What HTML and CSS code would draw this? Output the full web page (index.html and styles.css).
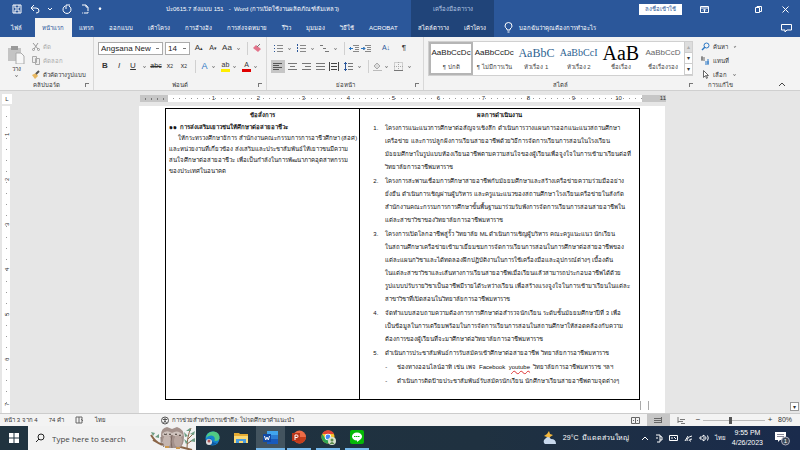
FILE: index.html
```
<!DOCTYPE html>
<html lang="th">
<head>
  <meta charset="UTF-8">
  <meta name="viewport" content="width=device-width, initial-scale=1.0">
  <title>Word</title>
  <link rel="stylesheet" href="styles.css">
</head>
<body>

<header class="header">
  <div class="titlebar">
    <div class="quick">
      <button aria-label="Save"><svg width="10" height="10" viewBox="0 0 10 10"><path d="M1 1h8v8H1zM3 1v3h4V1M3 9V6h4v3" /></svg></button>
      <button aria-label="Undo"><svg width="10" height="10" viewBox="0 0 10 10"><path d="M4 1L1 4l3 3M1 4h5q3 0 3 3q0 2-3 2" /></svg></button>
      <button class="tiny" aria-label="Undo list"><svg width="4" height="4" viewBox="0 0 4 4"><path d="M0 1l2 2 2-2" /></svg></button>
      <button aria-label="Repeat"><svg width="10" height="10" viewBox="0 0 10 10"><path d="M3 2a4 4 0 1 0 4 0M4 5V1h4" /></svg></button>
      <button aria-label="New"><svg width="10" height="10" viewBox="0 0 10 10"><path d="M2 1h4l2 2v6H2M6 1v2h2" stroke-dasharray="5 1" /></svg></button>
      <button class="tiny" aria-label="Customize"><svg width="4" height="4" viewBox="0 0 4 4"><path d="M1 1h2L2 3z" fill="#fff" /></svg></button>
    </div>
    <span class="doc-title">ปะ0615.7 ส่งแบบ 151 &nbsp; - &nbsp;Word (การเปิดใช้งานผลิตภัณฑ์ล้มเหลว)</span>
  </div>
  <div class="context-title">เครื่องมือตาราง</div>
  <div class="window-controls">
    <button class="sign-in">ลงชื่อเข้าใช้</button>
    <button aria-label="Ribbon options"><svg width="9" height="9" viewBox="0 0 9 9"><path d="M.5 1.5h8v6h-8zM.5 3h8M4.500 7V4.500M3 5.500l1.500-1.500 1.500 1.500" /></svg></button>
    <button aria-label="Restore"><svg width="9" height="9" viewBox="0 0 9 9"><path d="M1.500 2.500h4v5h-4zM3 2.500v-1h4.500v5h-2" /></svg></button>
    <button aria-label="Close"><svg width="9" height="9" viewBox="0 0 9 9"><path d="M1.500 1.500l6 6M7.500 1.500l-6 6" /></svg></button>
  </div>
  <nav class="tabs">
    <a href="#" class="file">ไฟล์</a>
    <a href="#" class="active">หน้าแรก</a>
    <a href="#">แทรก</a>
    <a href="#">ออกแบบ</a>
    <a href="#">เค้าโครง</a>
    <a href="#">การอ้างอิง</a>
    <a href="#">การส่งจดหมาย</a>
    <a href="#">รีวิว</a>
    <a href="#">มุมมอง</a>
    <a href="#">วิธีใช้</a>
    <a href="#">ACROBAT</a>
  </nav>
  <nav class="tabs context">
    <a href="#">สไตล์ตาราง</a>
    <a href="#">เค้าโครง</a>
  </nav>
  <div class="tell-me">
    <svg width="9" height="11" viewBox="0 0 9 11"><path d="M3 8V7Q1 5.500 1 4a3.500 3.500 0 0 1 7 0Q8 5.500 6 7v1zM3.500 10h2" /></svg>
    <span>บอกฉันว่าคุณต้องการทำอะไร</span>
    <button aria-label="Comments"><svg width="11" height="10" viewBox="0 0 11 10"><path d="M.5 1.500h10v5.500H6L4 9V7H.5z" /></svg></button>
  </div>
</header>

<section class="ribbon">
  <div class="group clipboard">
    <div class="group-body">
      <button class="paste">
        <svg width="18" height="19" viewBox="0 0 18 19"><path d="M1 3h13v13H1z" fill="#c4c4c4" /><path d="M4 1h7v4H4z" fill="#999" /><path d="M9 8h5l3 3v8H9z" fill="#f7f7f7" stroke="#aaa" /></svg>
        <span>วาง</span>
        <i class="arrow"></i>
      </button>
      <div class="stack">
        <button class="disabled"><svg width="8" height="9" viewBox="0 0 8 9"><path d="M1 1l5 6M6 1L2 7" stroke="#999" /><circle cx="1.500" cy="7.500" r="1" stroke="#999" fill="none" /><circle cx="6.500" cy="7.500" r="1" stroke="#999" fill="none" /></svg>ตัด</button>
        <button class="disabled"><svg width="8" height="9" viewBox="0 0 8 9"><path d="M.5.5h4v6h-4zM3.500 2.500h4v6h-4z" fill="#eee" stroke="#aaa" /></svg>คัดลอก</button>
        <button><svg width="8" height="9" viewBox="0 0 8 9"><path d="M0 5l4-2 2 3-3 3z" fill="#e8b75f" /><path d="M4 4l3-3" stroke="#555" stroke-width="2" /></svg>ตัวคัดวางรูปแบบ</button>
      </div>
    </div>
    <div class="group-name">คลิปบอร์ด<i class="launcher"></i></div>
  </div>

  <div class="group font">
    <div class="group-body rows">
      <div class="row">
        <select class="font-name" aria-label="Font"><option>Angsana New</option></select>
        <select class="font-size" aria-label="Font size"><option>14</option></select>
        <button class="big">A<sup>▴</sup></button>
        <button>A<sup>▾</sup></button>
        <button class="big">Aa</button><i class="arrow"></i>
        <button class="split" aria-label="Clear formatting"><svg width="10" height="10" viewBox="0 0 10 10"><path d="M1 5l3-3 5 4-3 3z" fill="#e3748b" /><path d="M5 4l3-3" stroke="#777" /></svg></button>
      </div>
      <div class="row">
        <button class="big"><b>B</b></button>
        <button class="big"><em>I</em></button>
        <button class="big"><u>U</u></button><i class="arrow"></i>
        <button><s>abc</s></button>
        <button>x<sub>2</sub></button>
        <button>x<sup>2</sup></button>
        <button class="split effect">A</button><i class="arrow"></i>
        <button class="mark yellow">ab</button><i class="arrow"></i>
        <button class="mark red">A</button><i class="arrow"></i>
      </div>
    </div>
    <div class="group-name">ฟอนต์<i class="launcher"></i></div>
  </div>

  <div class="group paragraph">
    <div class="group-body rows">
      <div class="row">
        <button aria-label="Bullets"><svg width="9" height="9" viewBox="0 0 9 9"><path d="M3 1.500h6M3 4.500h6M3 7.500h6" stroke="#888" /><path d="M0 1.500h1M0 4.500h1M0 7.500h1" stroke="#2b579a" /></svg></button><i class="arrow"></i>
        <button aria-label="Numbering"><svg width="9" height="9" viewBox="0 0 9 9"><path d="M3 1.500h6M3 4.500h6M3 7.500h6" stroke="#888" /><path d="M.5 0v9" stroke="#2b579a" stroke-dasharray="2 1" /></svg></button><i class="arrow"></i>
        <button aria-label="Multilevel list"><svg width="9" height="9" viewBox="0 0 9 9"><path d="M0 1.500h3M3 4.500h3M5 7.500h4" stroke="#777" /></svg></button><i class="arrow"></i>
        <button class="split" aria-label="Decrease indent"><svg width="10" height="9" viewBox="0 0 10 9"><path d="M4 1.500h6M6 3.500h4M6 5.500h4M4 7.500h6" stroke="#888" /><path d="M0 4.500h4M2 3L.5 4.500 2 6" stroke="#2b77c4" /></svg></button>
        <button aria-label="Increase indent"><svg width="10" height="9" viewBox="0 0 10 9"><path d="M4 1.500h6M6 3.500h4M6 5.500h4M4 7.500h6" stroke="#888" /><path d="M0 4.500h4M2.500 3L4 4.500 2.500 6" stroke="#2b77c4" /></svg></button>
        <button class="sort">A↓</button>
        <button class="big">¶</button>
      </div>
      <div class="row">
        <button class="pressed" aria-label="Align left"><svg width="10" height="9" viewBox="0 0 10 9"><path d="M0 1.500h9M0 3.500h6M0 5.500h9M0 7.500h6" stroke="#555" /></svg></button>
        <button aria-label="Center"><svg width="9" height="9" viewBox="0 0 9 9"><path d="M0 1.500h9M2 4.500h5M0 7.500h9" stroke="#777" /></svg></button>
        <button aria-label="Align right"><svg width="9" height="9" viewBox="0 0 9 9"><path d="M0 1.500h9M3 4.500h6M0 7.500h9" stroke="#777" /></svg></button>
        <button aria-label="Justify"><svg width="9" height="9" viewBox="0 0 9 9"><path d="M0 1.500h9M0 4.500h9M0 7.500h9" stroke="#777" /></svg></button>
        <button aria-label="Thai distributed"><svg width="10" height="9" viewBox="0 0 10 9"><path d="M.5 0v9M9.500 0v9M2 1.500h6M2 4.500h6M2 7.500h6" stroke="#444" /></svg></button>
        <button aria-label="Line spacing"><svg width="9" height="9" viewBox="0 0 9 9"><path d="M4 1.500h5M4 4.500h5M4 7.500h5" stroke="#777" /><path d="M1.500 0v9M0 2L1.500.5 3 2M0 7l1.500 1.500L3 7" stroke="#2b579a" /></svg></button><i class="arrow"></i>
        <button class="split" aria-label="Shading"><svg width="9" height="9" viewBox="0 0 9 9"><path d="M1 4l3-3 3 3-3 3z" fill="#ddd" stroke="#aaa" /><path d="M0 8.500h9" stroke="#bbb" /></svg></button><i class="arrow"></i>
        <button aria-label="Borders"><svg width="9" height="9" viewBox="0 0 9 9"><path d="M.5.5h8v8h-8zM4.500 0v9M0 4.500h9" fill="none" stroke="#aaa" stroke-dasharray="1 1" /><path d="M0 8.500h9" stroke="#777" /></svg></button><i class="arrow"></i>
      </div>
    </div>
    <div class="group-name">ย่อหน้า<i class="launcher"></i></div>
  </div>

  <div class="group styles">
    <div class="gallery">
      <button class="style selected"><span>AaBbCcDc</span>¶ ปกติ</button>
      <button class="style"><span>AaBbCcDc</span>¶ ไม่มีการเว้น</button>
      <button class="style h1"><span>AaBbC</span>หัวเรื่อง 1</button>
      <button class="style h2"><span>AaBbCcI</span>หัวเรื่อง 2</button>
      <button class="style title"><span>AaB</span>ชื่อเรื่อง</button>
      <button class="style sub"><span>AaBbCcD</span>ชื่อเรื่องรอง</button>
      <div class="gallery-scroll">
        <button class="off" aria-label="Up">▴</button>
        <button aria-label="Down">▾</button>
        <button aria-label="More">▾</button>
      </div>
    </div>
    <div class="group-name">สไตล์<i class="launcher"></i></div>
  </div>

  <div class="group editing">
    <div class="stack">
      <button><svg width="9" height="9" viewBox="0 0 9 9"><circle cx="5.500" cy="3.500" r="2.500" fill="none" stroke="#2b77c4" /><path d="M4 5L1 8" stroke="#2b77c4" stroke-width="1.500" /></svg>ค้นหา<i class="arrow"></i></button>
      <button><svg width="9" height="9" viewBox="0 0 9 9"><path d="M0 2h4M0 4h4M1 0v4" stroke="#666" /><path d="M4 6h4M4 8h4M7 3v5" stroke="#2b77c4" /></svg>แทนที่</button>
      <button><svg width="9" height="9" viewBox="0 0 9 9"><path d="M2.500.5v7l2-2 1 3 1-.5-1-2.500h2z" fill="#fff" stroke="#666" /></svg>เลือก<i class="arrow"></i></button>
    </div>
    <div class="group-name">การแก้ไข</div>
  </div>
  <button class="collapse" aria-label="Collapse ribbon"><svg width="8" height="5" viewBox="0 0 8 5"><path d="M1 4l3-3 3 3" stroke="#444" fill="none" /></svg></button>
</section>

<div class="ruler-row">
  <span class="tab-stop">L</span>
  <div class="ruler">
    <span class="margin"></span>
    <div class="inches">
      <span>1</span><span>2</span><span>3</span><span>4</span><span>5</span><span>6</span><span>7</span><span>8</span><span>9</span><span>10</span>
    </div>
    <span class="margin end">11</span>
  </div>
</div>

<main class="workspace">
  <div class="side-ruler">
    <span>1</span><span>2</span><span>3</span><span>4</span><span>5</span><span>6</span><span>7</span>
  </div>
  <div class="canvas">
    <article class="page">
      <table class="report">
        <thead>
          <tr><th>ข้อสั่งการ</th><th>ผลการดำเนินงาน</th></tr>
        </thead>
        <tbody>
          <tr>
            <td class="order">
              <b>๑๑ &nbsp;การส่งเสริมเยาวชนให้ศึกษาต่อสายอาชีวะ</b>
              <p>ให้กระทรวงศึกษาธิการ สำนักงานคณะกรรมการการอาชีวศึกษา (สอศ)<br>
              และหน่วยงานที่เกี่ยวข้อง ส่งเสริมและประชาสัมพันธ์ให้เยาวชนมีความ<br>
              สนใจศึกษาต่อสายอาชีวะ เพื่อเป็นกำลังในการพัฒนาภาคอุตสาหกรรม<br>
              ของประเทศในอนาคต</p>
            </td>
            <td class="result">
              <ol>
                <li>โครงการแนะแนวการศึกษาต่อสัญจรเชิงลึก ดำเนินการวางแผนการออกแนะแนวสถานศึกษา<br>
                เครือข่าย และการปลูกฝังการเรียนสายอาชีพด้วยวิธีการจัดการเรียนการสอนในโรงเรียน<br>
                มัธยมศึกษาในรูปแบบห้องเรียนอาชีพตามความสนใจของผู้เรียนเพื่อจูงใจในการเข้ามาเรียนต่อที่<br>
                วิทยาลัยการอาชีพมหาราช</li>
                <li>โครงการสะพานเชื่อมการศึกษาสายอาชีพกับมัธยมศึกษาและสร้างเครือข่ายความร่วมมืออย่าง<br>
                ยั่งยืน ดำเนินการเชิญผ่านผู้บริหาร และครูแนะแนวของสถานศึกษา โรงเรียนเครือข่ายในสังกัด<br>
                สำนักงานคณะกรรมการการศึกษาขั้นพื้นฐานมาร่วมรับฟังการจัดการเรียนการสอนสายอาชีพใน<br>
                แต่ละสาขาวิชาของวิทยาลัยการอาชีพมหาราช</li>
                <li>โครงการเปิดโลกอาชีพสู่รั้ว วิทยาลัย ML ดำเนินการเชิญผู้บริหาร คณะครูแนะแนว นักเรียน<br>
                ในสถานศึกษาเครือข่ายเข้ามาเยี่ยมชมการจัดการเรียนการสอนในการศึกษาต่อสายอาชีพของ<br>
                แต่ละแผนกวิชาและได้ทดลองฝึกปฏิบัติงานในการใช้เครื่องมือและอุปกรณ์ต่างๆ เบื้องต้น<br>
                ในแต่ละสาขาวิชาและเส้นทางการเรียนสายอาชีพเมื่อเรียนแล้วสามารถประกอบอาชีพได้ด้วย<br>
                รูปแบบปรับรายวิชาเป็นอาชีพมีรายได้ระหว่างเรียน เพื่อสร้างแรงจูงใจในการเข้ามาเรียนในแต่ละ<br>
                สาขาวิชาที่เปิดสอนในวิทยาลัยการอาชีพมหาราช</li>
                <li>จัดทำแบบสอบถามความต้องการการศึกษาต่อสำรวจนักเรียน ระดับชั้นมัธยมศึกษาปีที่ 3 เพื่อ<br>
                เป็นข้อมูลในการเตรียมพร้อมในการจัดการเรียนการสอนในสถานศึกษาให้สอดคล้องกับความ<br>
                ต้องการของผู้เรียนที่จะมาศึกษาต่อวิทยาลัยการอาชีพมหาราช</li>
                <li>ดำเนินการประชาสัมพันธ์การรับสมัครเข้าศึกษาต่อสายอาชีพ วิทยาลัยการอาชีพมหาราช
                  <ul>
                    <li>ช่องทางออนไลน์อาทิ เช่น เพจ &nbsp;Facebook &nbsp;<span class="typo">youtube</span> &nbsp;วิทยาลัยการอาชีพมหาราช ฯลฯ</li>
                    <li>ดำเนินการติดป้ายประชาสัมพันธ์รับสมัครนักเรียน นักศึกษาเรียนสายอาชีพตามจุดต่างๆ</li>
                  </ul>
                </li>
              </ol>
            </td>
          </tr>
        </tbody>
      </table>
      <div class="crop-marks"></div>
    </article>
  </div>
  <div class="scroll"><button aria-label="Scroll down">▾</button></div>
</main>

<footer class="status">
  <span>หน้า 3 จาก 4</span>
  <span>74 คำ</span>
  <svg width="9" height="8" viewBox="0 0 9 8"><path d="M4 1v6H1V1zM4 1h3v6H4M6 3l2 2" fill="none" stroke="#666" /></svg>
  <span>ไทย</span>
  <span class="access"><svg width="8" height="9" viewBox="0 0 8 9"><circle cx="4" cy="4.500" r="3.500" fill="none" stroke="#555" /><path d="M4 2v3M2 3.500h4M4 5l-1.500 2M4 5l1.500 2" stroke="#555" /></svg>การช่วยสำหรับการเข้าถึง: โปรดศึกษาคำแนะนำ</span>
  <div class="views">
    <button aria-label="Read mode"><svg width="9" height="7" viewBox="0 0 9 7"><path d="M.5.5h4v6h-4zM4.500.5h4v6h-4M2 3.500h1M6 3.500h1" fill="none" stroke="#666" /></svg></button>
    <button class="current" aria-label="Print layout"><svg width="8" height="6" viewBox="0 0 8 6"><path d="M0 1.500h8M0 3.500h8M0 5.500h8M7.500 0v6" stroke="#666" /></svg></button>
    <button aria-label="Web layout"><svg width="9" height="7" viewBox="0 0 9 7"><path d="M1 0v6M3 2.500h5M1 4.500h5M4 6.500h4" fill="none" stroke="#777" /></svg></button>
    <button class="step">−</button>
    <input type="range" min="10" max="170" value="80" aria-label="Zoom">
    <button class="step">+</button>
    <span class="percent">80%</span>
  </div>
</footer>

<div class="taskbar">
  <button class="start" aria-label="Start"><svg width="10" height="10" viewBox="0 0 10 10"><path d="M0 0h4.500v4.500H0zM5.500 0H10v4.500H5.500zM0 5.500h4.500V10H0zM5.500 5.500H10V10H5.500z" fill="#fff" /></svg></button>
  <label class="search">
    <svg width="10" height="10" viewBox="0 0 10 10"><circle cx="6" cy="4" r="3" fill="none" stroke="#222" /><path d="M4 6L1 9" stroke="#222" /></svg>
    <input type="text" placeholder="Type here to search" aria-label="Search">
    <svg class="owls" width="46" height="24" viewBox="0 0 46 24">
      <path d="M1 9q5 8 10 9l12 1 19 5M3 14l9 5" fill="none" stroke="#8a6547" stroke-width="2" />
      <path d="M37 23Q37 10 41 2M38 13l5-5M37 18l7-5" fill="none" stroke="#8a6547" />
      <path d="M36 5l4-3 1 3zM40 8l5-3-1 4zM35 11l-1-5 4 4zM40 15l5-3v4zM36 18l-2-5 4 3zM1 6l4 1-2 3zM5 11l4-3v4z" fill="#6e9d83" />
      <path d="M11 9q0-7 6-8l5 2 5-2q7 2 7 10 0 9-5 11H17q-6-4-6-13z" fill="#a3918b" />
      <path d="M12 8q4-5 10-1 6-4 11 2-2 3-6 2l-5-2-5 2q-4 0-5-3z" fill="#cfc3bd" />
      <ellipse cx="17" cy="15" rx="4" ry="6" fill="#c4b5af" />
      <ellipse cx="28" cy="15" rx="4" ry="6" fill="#b8a69f" />
      <path d="M14 8q1 1 3 0M19 8q1 1 2 0M25 8q1 1 2 0M29 9q1 1 2 0" fill="none" stroke="#453933" />
      <path d="M22 9q-2 7 0 13M11 11q-1 6 3 10" fill="none" stroke="#7b6860" />
      <path d="M15 21h4M26 22h4" stroke="#ca9851" stroke-width="2" />
    </svg>
  </label>
  <div class="apps">
    <button aria-label="Edge"><svg width="15" height="15" viewBox="0 0 15 15"><circle cx="7.500" cy="7.500" r="7" fill="#1684ce" /><path d="M1 7Q2 0 9 .5q6 1 5.500 7-1 3-5 2.500Q11 5 6 4.500 3 4.500 1 7z" fill="#51ca83" /><path d="M6 7q0 5 6 5-4 4-9 0 0-4 3-5z" fill="#0f59a5" /><circle cx="4" cy="11" r="3" fill="#ddd" /><circle cx="4" cy="10" r="1.500" fill="#a55" /></svg></button>
    <button aria-label="File Explorer"><svg width="14" height="12" viewBox="0 0 14 12"><path d="M0 1h5l1 1h8v9H0z" fill="#e6ab32" /><path d="M0 4h14v7H0z" fill="#fbd974" /><path d="M2 7h10v4H9V9H5v2H2z" fill="#4b9dde" /></svg></button>
    <button class="open focus" aria-label="Word"><svg width="15" height="13" viewBox="0 0 15 13"><path d="M4 0h11v4H4z" fill="#41a5ee" /><path d="M4 4h11v4H4z" fill="#2b7cd3" /><path d="M4 8h11v5H4z" fill="#185abd" /><path d="M0 3h8v8H0z" fill="#124aa5" /><path d="M1.500 5l1.200 4L4 6l1.300 3 1.200-4" fill="none" stroke="#fff" /></svg></button>
    <button class="open" aria-label="PowerPoint"><svg width="14" height="14" viewBox="0 0 14 14"><circle cx="7.500" cy="7" r="6.500" fill="#ed6c47" /><path d="M7.500 7h6.500a6.500 6.500 0 0 1-13 0z" fill="#c43e1c" /><path d="M0 3h8v8H0z" fill="#b9361a" /><path d="M3 10V5h2q1 0 1 1.200T5 7.500H3" fill="none" stroke="#fff" /></svg></button>
    <button class="open" aria-label="Chrome"><svg width="15" height="15" viewBox="0 0 15 15"><circle cx="7" cy="7" r="6.500" fill="#f6c32c" /><path d="M1.300 4A6.500 6.500 0 0 1 13 4H7z" fill="#e24436" /><path d="M1.300 4A6.500 6.500 0 0 0 7 13.500L9 9 4 8z" fill="#31a452" /><circle cx="7" cy="7" r="3.200" fill="#fff" /><circle cx="7" cy="7" r="2.400" fill="#4286f5" /><circle cx="11" cy="11" r="4" fill="#d8e3cf" /><circle cx="11" cy="10" r="1.500" fill="#5d8b4c" /><path d="M8.500 14q2.500-4 5 0z" fill="#5d8b4c" /></svg></button>
    <button class="open" aria-label="LINE"><svg width="14" height="14" viewBox="0 0 14 14"><rect width="14" height="14" rx="2" fill="#06b806" /><path d="M7 2.500c3 0 5 1.700 5 4 0 2-2 3.500-5 5.500V10.500c-3 0-5-1.700-5-4s2-4 5-4z" fill="#fff" /><path d="M4 6.500h6" stroke="#06b806" stroke-dasharray="1.500 .5" /></svg></button>
  </div>
  <div class="tray">
    <svg width="14" height="14" viewBox="0 0 14 14"><path d="M6 0l1 3 3 1-3 2-1 3-2-3-3-1 3-2z" fill="#f5b83d" stroke="none" /><path d="M2 13a3 3 0 0 1 0-5q3-4 6 0 5 0 5 5z" fill="#c8d9ed" stroke="none" /></svg>
    <span class="weather">29°C &nbsp;มีแดดส่วนใหญ่</span>
    <svg width="8" height="6" viewBox="0 0 8 6"><path d="M1 5l3-3 3 3" /></svg>
    <svg width="8" height="9" viewBox="0 0 8 9"><path d="M1 1h4v7H2M5 2l2 1v3H5M1 4h2" /></svg>
    <svg width="9" height="8" viewBox="0 0 9 8"><path d="M.5 1.500h8v5h-8zM3 3v2M5 3l2 2" /></svg>
    <svg width="9" height="8" viewBox="0 0 9 8"><path d="M1 7L4 2M3 7q0-4 5-5M5 7q0-2 3-2M6 7h1" /></svg>
    <svg width="10" height="8" viewBox="0 0 10 8"><path d="M1 3h1.500L5 1v6L2.500 5H1zM6.500 2.500q1 1.500 0 3M8.500 1.500q1.500 2.500 0 5" /></svg>
    <span class="lang">ไทย</span>
    <span class="clock">9:55 PM<br>4/26/2023</span>
    <button class="notice" aria-label="Notifications"><svg width="15" height="15" viewBox="0 0 15 15"><path d="M0 1h11v8H5l-2 2V9H0z" fill="#fff" stroke="none" /><path d="M2 3.500h7M2 5.500h7" stroke="#889" /><circle cx="10.500" cy="10" r="4" fill="#3b4858" stroke="#aab" /></svg><span>1</span></button>
  </div>
</div>

</body>
</html>
```
FILE: styles.css
```
* {
  box-sizing: border-box;
}
body {
  margin: 0;
  height: 100vh;
  display: flex;
  flex-direction: column;
  overflow: hidden;
  background: #e6e6e6;
  color: #333;
  font-family: "Liberation Sans", sans-serif;
  font-size: 6px;
  line-height: 10px;
  white-space: nowrap;
}
button {
  display: flex;
  align-items: center;
  justify-content: center;
  padding: 0;
  border: 0;
  background: none;
  color: inherit;
  font: inherit;
}
a {
  color: inherit;
  text-decoration: none;
}
svg {
  flex: none;
}

/* title bar and tabs */
.header {
  display: grid;
  grid-template-columns: 411px 83px 1fr;
  grid-template-rows: 18px 19px;
  background: #2b579a;
  color: #fff;
}
.header svg,
.tray svg {
  fill: none;
  stroke: #fff;
}
.titlebar {
  display: flex;
  align-items: center;
  padding-left: 12px;
}
.quick {
  display: flex;
  gap: 8px;
  width: 154px;
}
.quick .tiny {
  margin-right: 2px;
}
.context-title,
.context {
  background: #204479;
}
.context-title {
  padding-top: 4px;
  text-align: center;
  color: #b5c7e3;
}
.window-controls {
  display: flex;
  align-items: center;
  justify-content: flex-end;
  gap: 18px;
  padding-right: 10px;
}
.window-controls button:nth-child(3) {
  margin-left: 27px;
}
.sign-in {
  width: 43px;
  height: 11px;
  background: #fff;
  color: #2b579a;
}
.tabs {
  display: flex;
}
.tabs a {
  display: flex;
  align-items: center;
  padding: 0 8px 0 7px;
}
.tabs .file {
  padding: 0 13px 0 11px;
}
.tabs .active {
  background: #f3f3f3;
  color: #2b579a;
}
.context {
  justify-content: center;
}
.tell-me {
  display: flex;
  align-items: center;
  gap: 6px;
  padding: 0 8px 0 10px;
}
.tell-me button {
  margin-left: auto;
}

/* ribbon */
.ribbon {
  display: flex;
  height: 54px;
  background: #f3f3f3;
  border-bottom: 1px solid #d0d0d0;
}
.group {
  display: flex;
  flex-direction: column;
  justify-content: space-between;
  padding: 4px 4px 0;
  border-right: 1px solid #d8d8d8;
}
.group-body {
  display: flex;
}
.group-name {
  position: relative;
  text-align: center;
}
.launcher {
  position: absolute;
  right: 0;
  top: 3px;
  width: 4px;
  height: 4px;
  border: 1px solid #777;
  border-width: 1px 0 0 1px;
}
.arrow {
  width: 3px;
  height: 3px;
  margin: 0 3px;
  border: 1px solid #777;
  border-width: 0 1px 1px 0;
  transform: rotate(45deg) scale(0.7);
}
.clipboard {
  width: 94px;
}
.paste {
  flex-direction: column;
  width: 24px;
}
.stack {
  display: flex;
  flex-direction: column;
  gap: 3px;
}
.stack button {
  justify-content: flex-start;
  gap: 3px;
  height: 11px;
}
.clipboard .stack {
  margin-left: 4px;
}
.disabled {
  color: #aaa;
}
.font {
  width: 173px;
}
.rows {
  flex-direction: column;
  gap: 4px;
}
.row {
  display: flex;
  align-items: center;
  height: 14px;
}
.row button {
  min-width: 14px;
  height: 13px;
  font-size: 7px;
}
.row .big {
  font-size: 8px;
}
.row sup,
.row sub {
  font-size: 5px;
}
.row .split {
  margin-left: 4px;
  padding-left: 4px;
  border-left: 1px solid #d0d0d0;
}
.row select {
  height: 13px;
  padding: 0 8px 0 2px;
  border: 1px solid #ababab;
  border-radius: 0;
  appearance: none;
  background: #fff linear-gradient(#777, #777) right 3px center / 3px 1px no-repeat;
  color: #222;
  font: 8px "Liberation Sans", sans-serif;
}
.font-name {
  width: 65px;
  margin-right: 2px;
}
.font-size {
  width: 25px;
  margin-right: 2px;
}
.row .effect {
  color: #2b77c4;
  font-size: 9px;
}
.row .mark {
  height: 11px;
  min-width: 9px;
  margin-left: 3px;
  border-bottom: 3px solid #ffee00;
}
.row .red {
  border-color: #e00000;
}
.paragraph {
  width: 157px;
}
.paragraph .row .pressed {
  background: #c6c6c6;
}
.row .sort {
  margin: 0 4px 0 6px;
  color: #2b579a;
}
.styles {
  flex: 0 1 273px;
  border-right: 0;
}
.gallery {
  display: flex;
  height: 35px;
  background: #fff;
  border: 1px solid #d0d0d0;
}
.style {
  flex: 1;
  min-width: 0;
  flex-direction: column;
  justify-content: space-between;
  overflow: hidden;
  padding: 4px 1px 3px;
  color: #444;
}
.style span {
  color: #222;
  font-size: 8px;
  line-height: 14px;
}
.style.selected {
  border: 2px solid #b5b5b5;
  padding: 2px 0 1px;
}
.h1 span,
.h2 span {
  color: #2e6391;
  font-family: "Liberation Serif", serif;
  font-size: 12px;
}
.h2 span {
  font-size: 10px;
}
.title span {
  color: #000;
  font-family: "Liberation Serif", serif;
  font-size: 20px;
}
.sub span {
  color: #666;
}
.gallery-scroll {
  display: flex;
  flex-direction: column;
  width: 8px;
  border-left: 1px solid #ccc;
}
.gallery-scroll button {
  flex: 1;
  border-bottom: 1px solid #ccc;
}
.gallery-scroll .off {
  background: #ddd;
  color: #aaa;
}
.editing {
  width: 46px;
  border-right: 0;
}
.collapse {
  margin: auto 14px 3px auto;
}

/* rulers */
.ruler-row {
  display: flex;
  align-items: center;
  flex: none;
  height: 15px;
  padding-right: 6px;
}
.tab-stop {
  width: 10px;
  margin-left: 2px;
  background: #fff;
  text-align: center;
}
.ruler {
  display: flex;
  flex: 0 1 526px;
  height: 7px;
  margin: 0 auto;
  background: #fff;
  line-height: 7px;
}
.margin {
  flex: 0 0 28px;
  background: #c6c6c6 repeating-linear-gradient(90deg, transparent 0 5px, #777 5px 6px) 0 3px / 100% 2px no-repeat;
}
.margin.end {
  flex: 1;
  background: #c6c6c6;
  text-align: right;
}
.inches {
  display: flex;
  flex: 0 0 474px;
  padding-left: 23px;
  background: repeating-linear-gradient(90deg, transparent 0 5px, #999 5px 6px) 0 3px / 100% 1px no-repeat;
}
.inches span {
  flex: 0 0 45px;
  text-align: center;
}
.workspace {
  display: flex;
  flex: 1;
  min-height: 0;
}
.side-ruler {
  flex: none;
  width: 8px;
  margin-left: 2px;
  padding-top: 6px;
  overflow: hidden;
  background: #fff repeating-linear-gradient(transparent 0 10px, #999 10px 11px) 4px 0 / 1px 100% no-repeat;
}
.side-ruler span {
  display: flex;
  align-items: center;
  justify-content: center;
  height: 45px;
  writing-mode: vertical-rl;
  transform: rotate(180deg);
}

/* document */
.canvas {
  flex: 1;
  padding-left: 4px;
  overflow: hidden;
}
.page {
  max-width: 526px;
  height: 100%;
  margin: 0 auto;
  padding: 2px 25px 0 26px;
  background: #fff;
  color: #111;
}
.report {
  width: 100%;
  height: 292px;
  table-layout: fixed;
  border-collapse: collapse;
}
.report th,
.report td {
  padding: 0 4px;
  border: 1px solid #000;
  text-align: left;
  vertical-align: top;
}
.report th {
  width: 59%;
  height: 13px;
  border-bottom: 0;
  line-height: 12px;
  text-align: center;
}
.report th:first-child {
  width: 41%;
}
.report td {
  border-top: 0;
}
.report .order {
  padding: 0 2px 0 3px;
  line-height: 11px;
}
.order p {
  margin: 0;
  text-indent: 9px;
}
.result {
  line-height: 13px;
}
.result ol,
.result ul {
  margin: 0;
  padding: 0;
  list-style: none;
  counter-reset: item;
}
.result ol > li {
  display: block;
  margin-bottom: 1px;
  padding-left: 21px;
  counter-increment: item;
}
.result ol > li::before {
  content: counter(item) ".";
  display: inline-block;
  width: 12px;
  margin-left: -12px;
}
.result ul li {
  margin-top: 1px;
  padding-left: 12px;
}
.result ul li::before {
  content: "-";
  display: inline-block;
  width: 12px;
  margin-left: -12px;
}
.typo {
  text-decoration: underline wavy #d33 1px;
}
.crop-marks {
  width: 9px;
  height: 9px;
  margin: 1px -9px 0 auto;
  border: 1px solid #aaa;
  border-width: 0 1px;
}
.scroll {
  display: flex;
  align-items: flex-end;
  width: 10px;
}
.scroll button {
  width: 9px;
  height: 9px;
  margin-bottom: 2px;
  border: 1px solid #999;
  background: #fff;
}

/* status bar */
.status {
  display: flex;
  align-items: center;
  flex: none;
  gap: 11px;
  height: 13px;
  padding: 0 8px 0 4px;
  background: #f3f3f3;
  border-top: 1px solid #ccc;
}
.access {
  display: flex;
  align-items: center;
  gap: 3px;
  margin-left: 44px;
}
.views {
  display: flex;
  align-items: center;
  margin-left: auto;
}
.views button {
  width: 23px;
  height: 12px;
}
.views .current {
  background: #c6c6c6;
}
.views .step {
  width: 10px;
  font-size: 8px;
}
.views input {
  width: 62px;
  height: 7px;
  margin: 0;
  appearance: none;
  background: linear-gradient(#bbb, #bbb) 0 3px / 100% 1px no-repeat;
}
.views input::-webkit-slider-thumb {
  appearance: none;
  width: 3px;
  height: 7px;
  background: #555;
}
.percent {
  margin-left: 3px;
  font-size: 7px;
}

/* taskbar */
.taskbar {
  display: flex;
  flex: none;
  height: 24px;
  background: linear-gradient(90deg, #20333f, #1f3140 60%, #1a2b4c);
  color: #fff;
}
.start {
  width: 28px;
}
.search {
  display: flex;
  align-items: center;
  width: 168px;
  padding-left: 7px;
  background: #f1f1f1;
}
.search input {
  flex: 1;
  min-width: 0;
  padding: 0 0 0 7px;
  border: 0;
  background: none;
  font: 8px "Open Sans", sans-serif;
}
.search input::placeholder {
  color: #444;
}
.apps {
  display: flex;
  gap: 5px;
  padding-left: 4px;
}
.apps button {
  width: 24px;
}
.apps .open {
  border-bottom: 2px solid #76b9ed;
}
.apps .focus {
  width: 29px;
  margin: 0 -3px 0 -2px;
  background: #43545f;
}
.tray {
  display: flex;
  align-items: center;
  gap: 6px;
  margin-left: auto;
  padding-right: 10px;
}
.weather {
  width: 72px;
  font-size: 7px;
}
.clock {
  margin-right: 6px;
  font-size: 7px;
  text-align: center;
}
.notice {
  position: relative;
}
.notice span {
  position: absolute;
  right: 3px;
  bottom: 0;
}
```
